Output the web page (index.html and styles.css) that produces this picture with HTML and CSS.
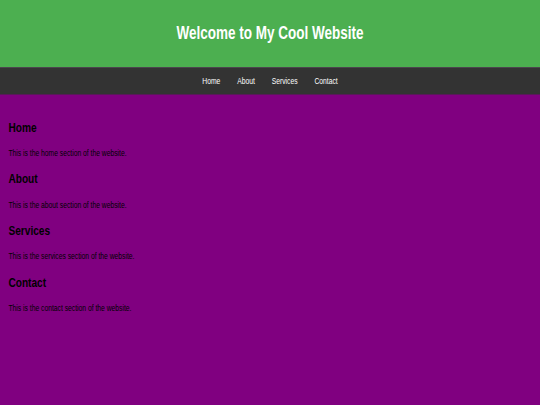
FILE: index.html
```html
<!DOCTYPE html>
<html lang="en">
<head>
<meta charset="utf-8">
<title>My Cool Website</title>
<link rel="stylesheet" href="styles.css">
</head>
<body>
<div class="viewport">
  <header class="site-header">
    <h1 class="site-title">Welcome to My Cool Website</h1>
  </header>
  <nav class="site-nav">
    <a class="nav-link" href="#home">Home</a>
    <a class="nav-link" href="#about">About</a>
    <a class="nav-link" href="#services">Services</a>
    <a class="nav-link" href="#contact">Contact</a>
  </nav>
  <main class="content">
    <section class="section" id="home">
      <h2 class="section-title">Home</h2>
      <p class="section-text">This is the home section of the website.</p>
    </section>
    <section class="section" id="about">
      <h2 class="section-title">About</h2>
      <p class="section-text">This is the about section of the website.</p>
    </section>
    <section class="section" id="services">
      <h2 class="section-title">Services</h2>
      <p class="section-text">This is the services section of the website.</p>
    </section>
    <section class="section" id="contact">
      <h2 class="section-title">Contact</h2>
      <p class="section-text">This is the contact section of the website.</p>
    </section>
  </main>
</div>
</body>
</html>
```
FILE: styles.css
```css
html, body {
  margin: 0;
  padding: 0;
  width: 540px;
  height: 405px;
  overflow: hidden;
  background: #800080;
}

body {
  font-family: "Liberation Sans", Arial, sans-serif;
  color: #000;
}

.viewport {
  width: 1280px;
  height: 720px;
  transform: scale(0.421875, 0.5625);
  transform-origin: 0 0;
  background: #800080;
}

.site-header {
  background: #4caf50;
  color: #fff;
  padding: 20px;
  text-align: center;
}

.site-title {
  margin: 0.67em 0;
  font-size: 32px;
  font-weight: bold;
}

.site-nav {
  background: #333;
  padding: 15px;
  display: flex;
  justify-content: center;
  gap: 40px;
  line-height: 18px;
}

.nav-link {
  color: #fff;
  text-decoration: none;
  font-size: 16px;
}

.content {
  padding: 21px 20px 20px;
}

.section {
  padding-top: 23px;
}

.section-title {
  font-size: 24px;
  font-weight: bold;
  margin: 0 0 23px;
}

.section-text {
  font-size: 16px;
  margin: 0;
}
```
